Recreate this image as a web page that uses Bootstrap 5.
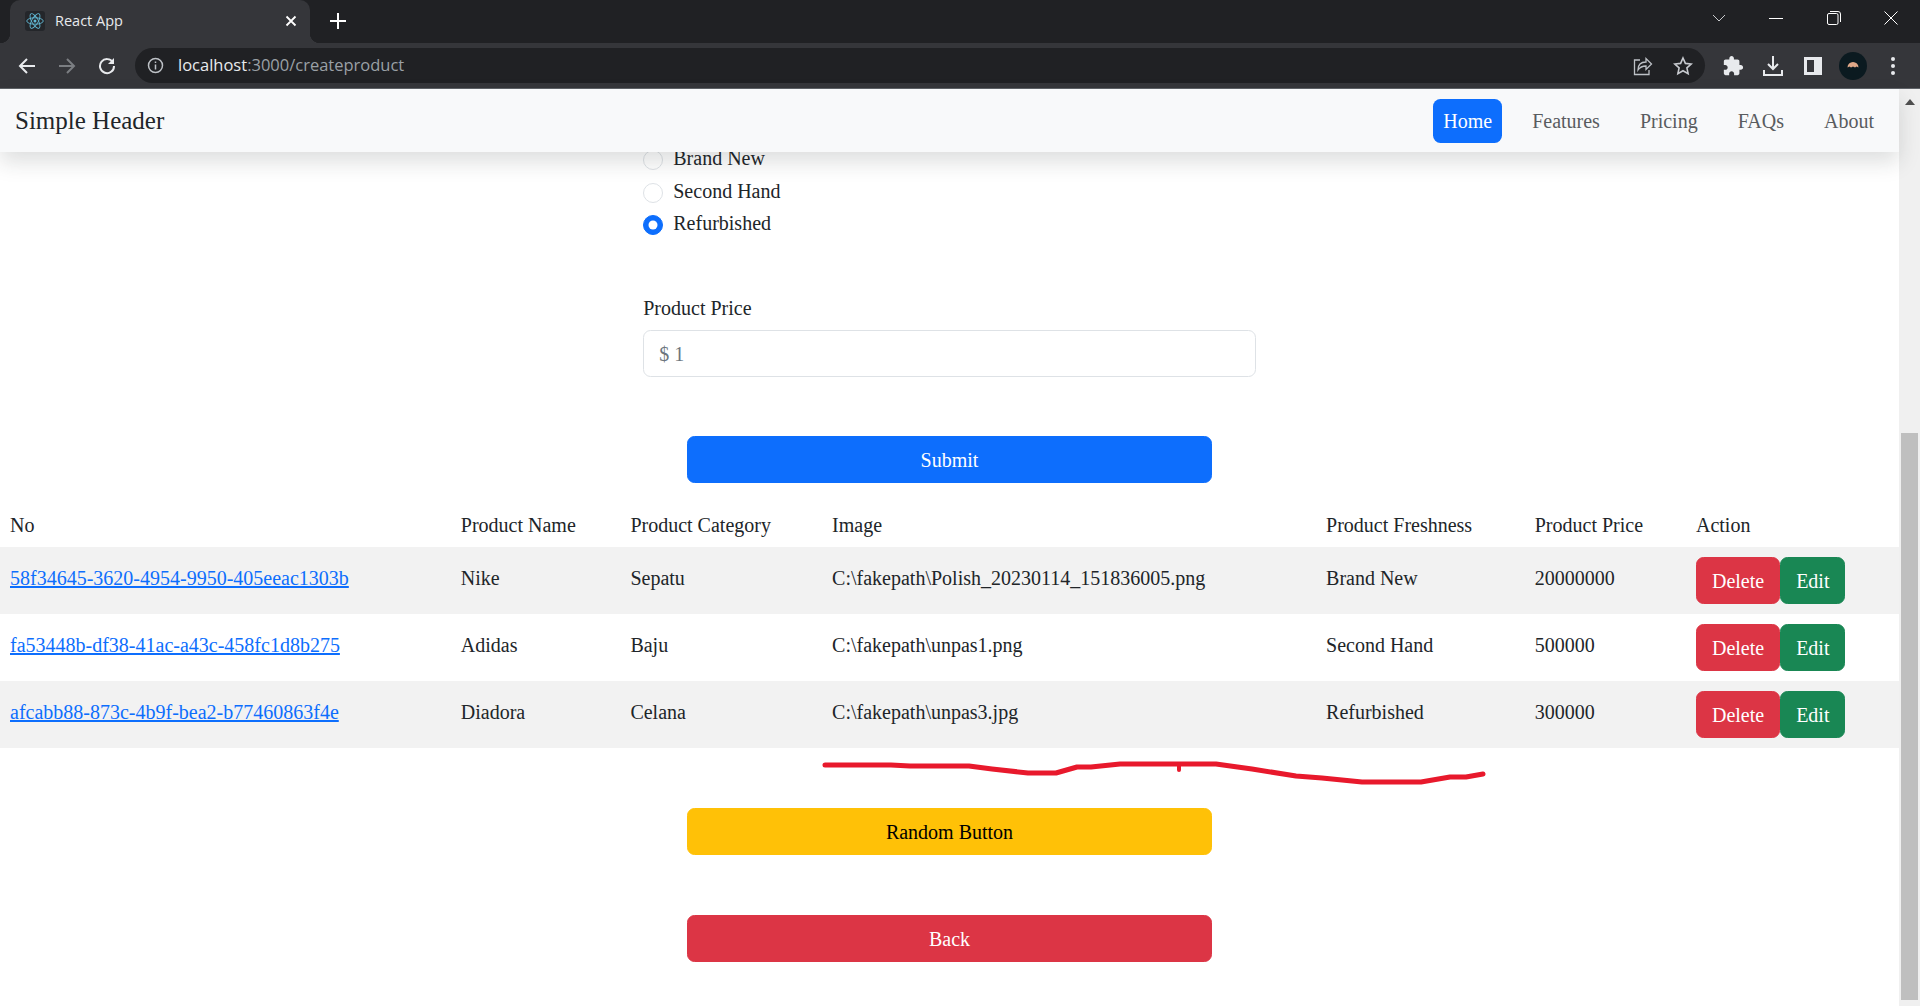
<!DOCTYPE html>
<html lang="en">
<head>
    <meta charset="UTF-8">
    <title>React App</title>
    <link rel="stylesheet" href="https://cdn.jsdelivr.net/npm/bootstrap@5.3.0/dist/css/bootstrap.min.css">
    <style>
        html { font-size: 20px; }
        body {
            font-family: "Liberation Serif", "Times New Roman", serif;
            color: #212529;
            height: 1006px;
            overflow: hidden;
        }
        /* browser frame */
        .tab-strip { height: 43px; background: #202124; font-family: "Open Sans", sans-serif; }
        .tab-current {
            position: relative;
            width: 300px; height: 43px; margin-left: 10px; padding: 0 13px 2px 15px;
            background: #35363a; border-radius: 10px 10px 0 0; color: #e8eaed; font-size: 14.5px;
        }
        .tab-current::before, .tab-current::after {
            content: ""; position: absolute; bottom: 0; width: 10px; height: 10px;
        }
        .tab-current::before { left: -10px; background: radial-gradient(circle at 0 0, #202124 10px, #35363a 10.5px); }
        .tab-current::after { right: -10px; background: radial-gradient(circle at 100% 0, #202124 10px, #35363a 10.5px); }
        .tab-plus { margin-left: 20px; margin-bottom: 2px; }
        .tab-favicon { width: 20px; height: 20px; background: #24262a; border-radius: 3px; }
        .win-ctrls { padding-bottom: 7px; }
        .win-ctrl { width: 57.5px; }
        .tool-bar { height: 46px; background: #35363a; border-bottom: 1px solid #5f6368; padding: 0 7px; }
        .tool-btn { width: 40px; }
        .url-box {
            height: 35px; margin: 0 8px; padding: 0 12px; background: #202124;
            border-radius: 18px; font-family: "Open Sans", sans-serif; font-size: 16.5px; color: #9aa0a6;
        }
        .url-info { margin-right: 14px; }
        .url-host { color: #e8eaed; }
        /* page */
        .page-area { height: 917px; }
        .page-main { width: 1899px; }
        .head-bar { height: 63px; padding: 0 15px; background: #f8f9fa; z-index: 2; }
        .head-brand { font-size: 25px; color: #212529; }
        .head-bar .nav-link { padding: 7px 10px; color: #595c5f; }
        .head-bar .nav-link.active { background: #0d6efd; color: #fff; }
        .form-box { width: 612.5px; margin: -9px auto 0; }
        .form-box .form-check-input { margin-top: 7px; }
        .price-gap { margin-top: 55px; }
        .price-gap .form-label { margin-bottom: 7px; }
        .wide-btn { width: 525px; }
        .submit-gap { margin-top: 59px; margin-bottom: 14px; }
        .item-table { --bs-table-striped-bg: #f2f2f2; margin-bottom: 0; }
        .item-table td, .item-table th { white-space: nowrap; }
        .item-table th { padding-top: 13px; padding-bottom: 7px; }
        .item-table td { padding-top: 16px; }
        .item-table td.action-cell { padding-top: 10px; }
        .scribble { display: block; }
        .back-gap { margin-top: 60px; }
        .fake-scroll { width: 21px; background: #f0f0f0; }
        .scroll-up { height: 25px; }
        .scroll-space { height: 319px; }
        .scroll-thumb { margin: 0 2px 6px 2px; flex-grow: 1; background: #bfbfbf; }
    </style>
</head>
<body class="d-flex flex-column">
    <div class="tab-strip d-flex align-items-center justify-content-between">
        <div class="d-flex align-items-center">
            <div class="tab-current d-flex align-items-center">
                <div class="tab-favicon d-flex align-items-center justify-content-center me-2">
                    <svg width="18" height="18" viewBox="-12 -12 24 24" fill="none" stroke="#61b8d4" stroke-width="1.2">
                        <circle r="2" fill="#61b8d4" stroke="none"/>
                        <ellipse rx="11" ry="4.3"/>
                        <ellipse rx="11" ry="4.3" transform="rotate(60)"/>
                        <ellipse rx="11" ry="4.3" transform="rotate(120)"/>
                    </svg>
                </div>
                <span class="flex-grow-1">React App</span>
                <svg width="12" height="12" viewBox="0 0 12 12" stroke="#fff" stroke-width="1.8"><path d="M1.5 1.5l9 9M10.5 1.5l-9 9"/></svg>
            </div>
            <svg class="tab-plus" width="16" height="16" viewBox="0 0 16 16" stroke="#fff" stroke-width="2"><path d="M8 0v16M0 8h16"/></svg>
        </div>
        <div class="win-ctrls d-flex align-items-center">
            <div class="win-ctrl d-flex justify-content-center"><svg width="14" height="8" viewBox="0 0 14 8" fill="none" stroke="#c8cacd"><path d="M1 1l6 6 6-6"/></svg></div>
            <div class="win-ctrl d-flex justify-content-center"><svg width="14" height="14" viewBox="0 0 14 14" stroke="#fff"><path d="M0 7.5h14"/></svg></div>
            <div class="win-ctrl d-flex justify-content-center"><svg width="14" height="14" viewBox="0 0 14 14" fill="none" stroke="#fff"><rect x=".5" y="2.5" width="10.5" height="11" rx="1.5"/><path d="M3 .5h8a2.5 2.5 0 0 1 2.5 2.5v8"/></svg></div>
            <div class="win-ctrl d-flex justify-content-center"><svg width="14" height="14" viewBox="0 0 14 14" stroke="#fff"><path d="M.5.5l13 13M13.5.5l-13 13"/></svg></div>
        </div>
    </div>
    <div class="tool-bar d-flex align-items-center">
        <div class="tool-btn d-flex justify-content-center"><svg width="18" height="18" viewBox="0 0 18 18" fill="none" stroke="#e8eaed" stroke-width="2"><path d="M17 9H2M9 2L2 9l7 7"/></svg></div>
        <div class="tool-btn d-flex justify-content-center"><svg width="18" height="18" viewBox="0 0 18 18" fill="none" stroke="#7b7e82" stroke-width="2"><path d="M1 9h15M9 2l7 7-7 7"/></svg></div>
        <div class="tool-btn d-flex justify-content-center"><svg width="18" height="18" viewBox="0 0 18 18" fill="none" stroke="#e8eaed" stroke-width="2"><path d="M15 5.5A7 7 0 1 0 16 9"/><path d="M16 1v6h-6z" fill="#e8eaed" stroke="none"/></svg></div>
        <div class="url-box flex-grow-1 d-flex align-items-center">
            <svg class="url-info" width="17" height="17" viewBox="0 0 17 17" fill="none" stroke="#bdc1c6" stroke-width="1.5"><circle cx="8.5" cy="8.5" r="7"/><path d="M8.5 7.5v5M8.5 4.5v1.500"/></svg>
            <span class="flex-grow-1"><span class="url-host">localhost</span>:3000/createproduct</span>
            <svg class="me-3" width="20" height="20" viewBox="0 0 20 20" fill="none" stroke="#bdc1c6" stroke-width="1.3"><path d="M7 4H1.500v14.500H16V14"/><path d="M5 14c0-5 3-8 8-8V2.500L18.500 8 13 13.500V10c-4 0-6 1-8 4z"/></svg>
            <svg width="20" height="20" viewBox="0 0 20 20" fill="none" stroke="#c7cacf" stroke-width="1.6"><path d="M10 2l2.400 5.400 5.800.6-4.300 3.900 1.200 5.700L10 14.700l-5.100 2.900 1.200-5.700L1.800 8l5.800-.6z"/></svg>
        </div>
        <div class="tool-btn d-flex justify-content-center"><svg width="22" height="22" viewBox="0 0 24 24" fill="#e8eaed"><path d="M20.5 11H19V7c0-1.100-.9-2-2-2h-4V3.500C13 2.120 11.880 1 10.500 1S8 2.120 8 3.500V5H4c-1.100 0-1.990.9-1.990 2v3.800H3.500c1.490 0 2.700 1.210 2.700 2.700s-1.210 2.700-2.700 2.700H2V20c0 1.100.9 2 2 2h3.800v-1.500c0-1.490 1.210-2.700 2.700-2.700s2.700 1.210 2.700 2.700V22H17c1.100 0 2-.9 2-2v-4h1.500c1.380 0 2.500-1.120 2.500-2.500S21.880 11 20.500 11z"/></svg></div>
        <div class="tool-btn d-flex justify-content-center"><svg width="20" height="20" viewBox="0 0 20 20" fill="none" stroke="#e8eaed" stroke-width="2"><path d="M10 0v12M5 8l5 5 5-5"/><path d="M1 14v5h18v-5"/></svg></div>
        <div class="tool-btn d-flex justify-content-center"><svg width="18" height="18" viewBox="0 0 18 18" fill="none" stroke="#e8eaed" stroke-width="3"><rect x="1.5" y="1.5" width="15" height="15"/><path d="M13 1.500v15" stroke-width="6"/></svg></div>
        <div class="tool-btn d-flex justify-content-center"><svg width="28" height="28" viewBox="0 0 28 28"><circle cx="14" cy="14" r="14" fill="#0b1a20"/><path d="M8.500 15.500a5.500 5.500 0 0 1 11 0l-2-1-1.500 1-2-1-2 1-1.500-1z" fill="#e0a888"/></svg></div>
        <div class="tool-btn d-flex justify-content-center"><svg width="4" height="18" viewBox="0 0 4 18" fill="#e8eaed"><circle cx="2" cy="2" r="2"/><circle cx="2" cy="9" r="2"/><circle cx="2" cy="16" r="2"/></svg></div>
    </div>
    <div class="page-area d-flex">
        <div class="page-main d-flex flex-column">
            <header class="head-bar shadow position-relative d-flex align-items-center justify-content-between flex-shrink-0">
                <a class="head-brand text-decoration-none" href="#">Simple Header</a>
                <ul class="nav nav-pills gap-3">
                    <li class="nav-item"><a class="nav-link active" href="#">Home</a></li>
                    <li class="nav-item"><a class="nav-link" href="#">Features</a></li>
                    <li class="nav-item"><a class="nav-link" href="#">Pricing</a></li>
                    <li class="nav-item"><a class="nav-link" href="#">FAQs</a></li>
                    <li class="nav-item"><a class="nav-link" href="#">About</a></li>
                </ul>
            </header>
            <div class="form-box">
                <div class="form-check">
                    <input class="form-check-input" type="radio" name="fresh" id="f1">
                    <label class="form-check-label" for="f1">Brand New</label>
                </div>
                <div class="form-check">
                    <input class="form-check-input" type="radio" name="fresh" id="f2">
                    <label class="form-check-label" for="f2">Second Hand</label>
                </div>
                <div class="form-check">
                    <input class="form-check-input" type="radio" name="fresh" id="f3" checked>
                    <label class="form-check-label" for="f3">Refurbished</label>
                </div>
                <div class="price-gap">
                    <label class="form-label" for="price">Product Price</label>
                    <input class="form-control text-secondary" id="price" type="text" value="$ 1">
                </div>
            </div>
            <button class="btn btn-primary wide-btn mx-auto submit-gap" type="button">Submit</button>
            <table class="table table-striped table-borderless item-table">
                <thead>
                    <tr>
                        <th class="fw-normal">No</th>
                        <th class="fw-normal">Product Name</th>
                        <th class="fw-normal">Product Category</th>
                        <th class="fw-normal">Image</th>
                        <th class="fw-normal">Product Freshness</th>
                        <th class="fw-normal">Product Price</th>
                        <th class="fw-normal">Action</th>
                    </tr>
                </thead>
                <tbody>
                    <tr>
                        <td><a href="#">58f34645-3620-4954-9950-405eeac1303b</a></td>
                        <td>Nike</td><td>Sepatu</td>
                        <td>C:\fakepath\Polish_20230114_151836005.png</td>
                        <td>Brand New</td><td>20000000</td>
                        <td class="action-cell"><button class="btn btn-danger" type="button">Delete</button><button class="btn btn-success" type="button">Edit</button></td>
                    </tr>
                    <tr>
                        <td><a href="#">fa53448b-df38-41ac-a43c-458fc1d8b275</a></td>
                        <td>Adidas</td><td>Baju</td>
                        <td>C:\fakepath\unpas1.png</td>
                        <td>Second Hand</td><td>500000</td>
                        <td class="action-cell"><button class="btn btn-danger" type="button">Delete</button><button class="btn btn-success" type="button">Edit</button></td>
                    </tr>
                    <tr>
                        <td><a href="#">afcabb88-873c-4b9f-bea2-b77460863f4e</a></td>
                        <td>Diadora</td><td>Celana</td>
                        <td>C:\fakepath\unpas3.jpg</td>
                        <td>Refurbished</td><td>300000</td>
                        <td class="action-cell"><button class="btn btn-danger" type="button">Delete</button><button class="btn btn-success" type="button">Edit</button></td>
                    </tr>
                </tbody>
            </table>
            <!-- hand drawn underline on the screenshot -->
            <svg class="scribble flex-shrink-0" width="1899" height="60" viewBox="0 746 1899 60" fill="none" stroke="#e8192c" stroke-width="5" stroke-linecap="round" stroke-linejoin="round">
                <path d="M825 763L891 763L910 764L969 764L992 767L1028 771L1056 771L1077 765L1091 765L1120 762L1216 762L1252 767L1296 774L1322 776L1362 780L1421 780L1450 775L1466 775L1483 772"/>
                <path d="M1179 762v6" stroke-width="4"/>
            </svg>
            <button class="btn btn-warning wide-btn mx-auto flex-shrink-0" type="button">Random Button</button>
            <button class="btn btn-danger wide-btn mx-auto back-gap flex-shrink-0" type="button">Back</button>
        </div>
        <div class="fake-scroll d-flex flex-column">
            <div class="scroll-up d-flex align-items-center justify-content-center">
                <svg width="10" height="6" viewBox="0 0 10 6" fill="#505050"><path d="M5 0l5 6H0z"/></svg>
            </div>
            <div class="scroll-space"></div>
            <div class="scroll-thumb"></div>
        </div>
    </div>
    <script src="https://cdn.jsdelivr.net/npm/bootstrap@5.3.0/dist/js/bootstrap.bundle.min.js"></script>
</body>
</html>
